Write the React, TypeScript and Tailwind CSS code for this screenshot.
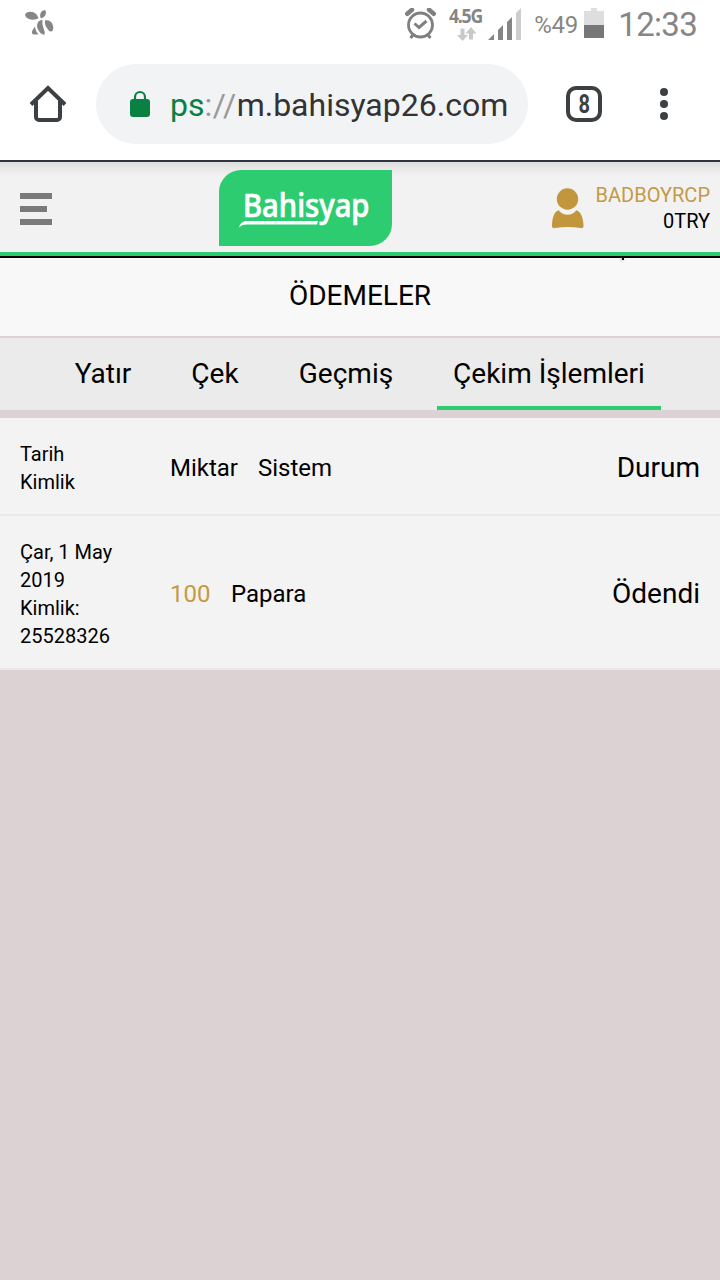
const tabs = [
  { label: "Yatır", width: "w-[88px]" },
  { label: "Çek", width: "w-[80px]" },
  { label: "Geçmiş", width: "w-[126px]" },
  { label: "Çekim İşlemleri", width: "w-[224px]", active: true },
];

function StatusBar() {
  return (
    <div className="flex h-12 items-center justify-between pl-6 text-[#868686]">
      {/* Bee */}
      <svg width="32" height="30" viewBox="0 0 32 30" fill="#868686">
        <path d="M1 6C2 2 9 2 12 5c1.500 1.500 2 3 2.500 4-2 1.500-6 2.500-9.500 1C3 9 1.500 8 1 6z" />
        <path d="M17 9.500c-2-3-.500-8 4-8.500C23 3 22 8 17 9.500z" />
        <path d="M18.500 11c-5.500 0-6.500 6-4.500 9.500 1.500 3 3.500 5 6.500 5.200 1.500-3-3-8-2-14.700z" />
        <path d="M21 11.500c5.500-2 10 5 7.700 10-1.200 1.700-3 1.300-4.700-1-2.500-3-3.500-5.500-3-9z" />
        <path d="M11 17.500c-1 2-3.500 4-3 6.500 0 1.500 3.500 2 6.500 1.200-2-2-3-4-3.500-7.700z" />
      </svg>

      <div className="flex h-12 pr-[23px]">
        {/* Alarm */}
        <svg className="mt-2 mr-[13px]" width="32" height="32" viewBox="0 0 32 32" fill="none" stroke="#808080">
          <circle cx="16.500" cy="17" r="12" strokeWidth="2.800" />
          <path d="M3.300 5.800 8 1.800M29.700 5.800 25 1.800" strokeWidth="4.500" strokeLinecap="round" />
          <path d="M10.500 15.500l4.500 4 7.500-6.500" strokeWidth="3" />
          <path d="M9 27l-2.500 3M24 27l2.500 3" strokeWidth="3" />
        </svg>

        {/* Network type */}
        <div className="mr-[3px] w-9 pt-[7px]">
          <div className="origin-left scale-x-[0.880] font-['Noto_Sans'] text-[20px] leading-[18px] font-bold tracking-[-1.400px] whitespace-nowrap text-[#858585]">
            4.5G
          </div>
          <svg className="mt-[2px] ml-2" width="20" height="15" viewBox="0 0 20 15" fill="#c9c9c9">
            <path d="M3.500 1.500H7.500v6.500H11l-5.500 6L0 8h3.500z" />
            <path d="M12 12.500h4V6.500h3.500L14 0 8.500 6.500H12z" />
          </svg>
        </div>

        <svg className="mt-2" width="34" height="32" viewBox="0 0 34 32" fill="#858585">
          <path d="M0 32l6-6v6zM10 32V22l5-5v15zM19 32V14l5-5v23z" />
          <path d="M28 32V5l5-5v32z" fill="#cdcdcd" />
        </svg>

        <span className="ml-[12px] w-[50px] pt-[9px] text-[24px] leading-[32px] tracking-[-0.300px]">%49</span>
        <svg className="mt-2" width="20" height="30" viewBox="0 0 20 30">
          <path d="M0 3h7V0h6v3h7v14H0z" fill="#dedede" />
          <path d="M0 17h20v13H0z" fill="#777" />
        </svg>
        <span className="ml-[14px] pt-[5px] text-[33px] leading-[40px] tracking-[-0.700px]">12:33</span>
      </div>
    </div>
  );
}

function BrowserBar() {
  return (
    <div className="flex h-28 pt-4">
      <svg className="mt-5 ml-7" width="40" height="40" viewBox="0 0 40 40" fill="none" stroke="#3c4043" strokeWidth="4">
        <path d="M3 20.500 20 4l17 16.500" />
        <path d="M8 17v16a3 3 0 0 0 3 3h18a3 3 0 0 0 3-3V17" />
      </svg>

      <div className="ml-7 flex h-20 w-[432px] items-center rounded-full bg-[#f1f3f4] pl-[34px]">
        <svg width="20" height="28" viewBox="0 0 20 28">
          <path d="M5 10V7a5 5 0 0 1 10 0v3" fill="none" stroke="#0b8043" strokeWidth="2.200" />
          <rect y="9" width="20" height="18" rx="3" fill="#0b8043" />
        </svg>
        <span className="ml-5 pt-px text-[32px] leading-10 whitespace-nowrap text-[#333]">
          <span className="text-[#0b8043]">ps</span>
          <span className="tracking-[0.500px] text-[#999]">://</span>m.bahisyap26.com
        </span>
      </div>

      <div className="mt-[22px] ml-[38px] flex h-9 w-9 items-center justify-center rounded-[10px] border-4 border-[#3c4043] text-[25px] leading-none font-bold text-[#3c4043]">
        <span className="scale-x-[0.800]">8</span>
      </div>

      <div className="mt-6 ml-[58px] flex flex-col gap-1">
        <i className="h-2 w-2 rounded-full bg-[#3c4043]" />
        <i className="h-2 w-2 rounded-full bg-[#3c4043]" />
        <i className="h-2 w-2 rounded-full bg-[#3c4043]" />
      </div>
    </div>
  );
}

function Logo() {
  return (
    <svg className="mt-2" width="173" height="76" viewBox="0 0 173 76">
      <path d="M0 22A22 22 0 0 1 22 0H173V54A22 22 0 0 1 151 76H0z" fill="#2ecc71" />
      <text
        x="24"
        y="46.700"
        fill="#fff"
        stroke="#fff"
        strokeWidth="0.700"
        fontFamily="'Noto Sans', sans-serif"
        fontSize="32.500"
        fontWeight="500"
        textLength="126.500"
        lengthAdjust="spacingAndGlyphs"
      >
        Bahisyap
      </text>
      <path d="M20 57.500c1.500-5 4-6.500 9-6.500h70l-1 3.500H28c-4 0-6 1-8 3z" fill="#fff" />
    </svg>
  );
}

function SiteHeader() {
  return (
    <header className="flex h-[94px] justify-between border-b-4 border-[#2ecc71] bg-[#f2f2f2] bg-linear-to-b from-[#dedede] to-[#f2f2f2] to-[14px]">
      <div className="mt-[31px] ml-5 flex w-[199px] flex-col gap-[7px]">
        <i className="h-[6px] w-8 bg-[#7a7a7a]" />
        <i className="h-[6px] w-[27px] bg-[#7a7a7a]" />
        <i className="h-[6px] w-8 bg-[#7a7a7a]" />
      </div>
      <Logo />
      <div className="flex flex-1 justify-end pr-2.5">
        <svg className="mt-[26px] mr-3" width="32" height="41" viewBox="0 0 32 41" fill="#c2963d">
          <circle cx="15.500" cy="11" r="10.700" />
          <path d="M6.500 22.300c5 6 13 6 18 0 4 1 7 8 7 15.500 0 2-1 2.700-3 2.200q-13-2-25.500 0C1 40.500 0 39.800 0 37.800c0-7.500 2.500-14.500 6.500-15.500z" />
        </svg>
        <div className="pt-5 text-right text-[20px] leading-[26px]">
          <div className="text-[#c49a45]">BADBOYRCP</div>
          <div>0TRY</div>
        </div>
      </div>
    </header>
  );
}

export default function App() {
  return (
    <div className="h-[1280px] w-[720px] overflow-hidden bg-[#dcd2d3] font-[Roboto,sans-serif] text-black">
      <div className="h-[162px] border-b-2 border-[#2f3340] bg-white">
        <StatusBar />
        <BrowserBar />
      </div>
      <SiteHeader />

      <div className="relative h-[82px] border-t-2 border-b-2 border-t-black border-b-[#dcd2d3] bg-[#f8f8f8] pt-[19px] text-center text-[28px] leading-[38px]">
        <i className="absolute top-0 left-[622px] h-0.5 w-0.5 bg-black shadow-[-1px_0_3px_#777]" />
        ÖDEMELER
      </div>

      <nav className="flex h-[72px] gap-7 bg-[#ebebeb] pl-[59px]">
        {tabs.map((tab) => (
          <div
            key={tab.label}
            className={`${tab.width} border-b-4 text-center text-[28px] leading-[71px] whitespace-nowrap ${
              tab.active ? "border-[#2ecc71]" : "border-transparent"
            }`}
          >
            {tab.label}
          </div>
        ))}
      </nav>

      <section className="mt-2">
        <div className="flex h-[98px] items-center border-b-2 border-[#e9e9e9] bg-[#f3f3f3] px-5 pt-1">
          <div className="w-[150px] text-[20px] leading-7">
            Tarih
            <br />
            Kimlik
          </div>
          <span className="w-[88px] text-[24px]">Miktar</span>
          <span className="text-[24px]">Sistem</span>
          <span className="ml-auto text-[28px]">Durum</span>
        </div>

        <div className="flex h-[154px] items-center border-b-2 border-[#e9e9e9] bg-[#f3f3f3] px-5 pt-1">
          <div className="w-[150px] text-[20px] leading-7">
            Çar, 1 May
            <br />
            2019
            <br />
            Kimlik:
            <br />
            25528326
          </div>
          <span className="w-[61px] text-[24px] text-[#c49a45]">100</span>
          <span className="text-[24px]">Papara</span>
          <span className="ml-auto text-[28px]">Ödendi</span>
        </div>
      </section>
    </div>
  );
}
